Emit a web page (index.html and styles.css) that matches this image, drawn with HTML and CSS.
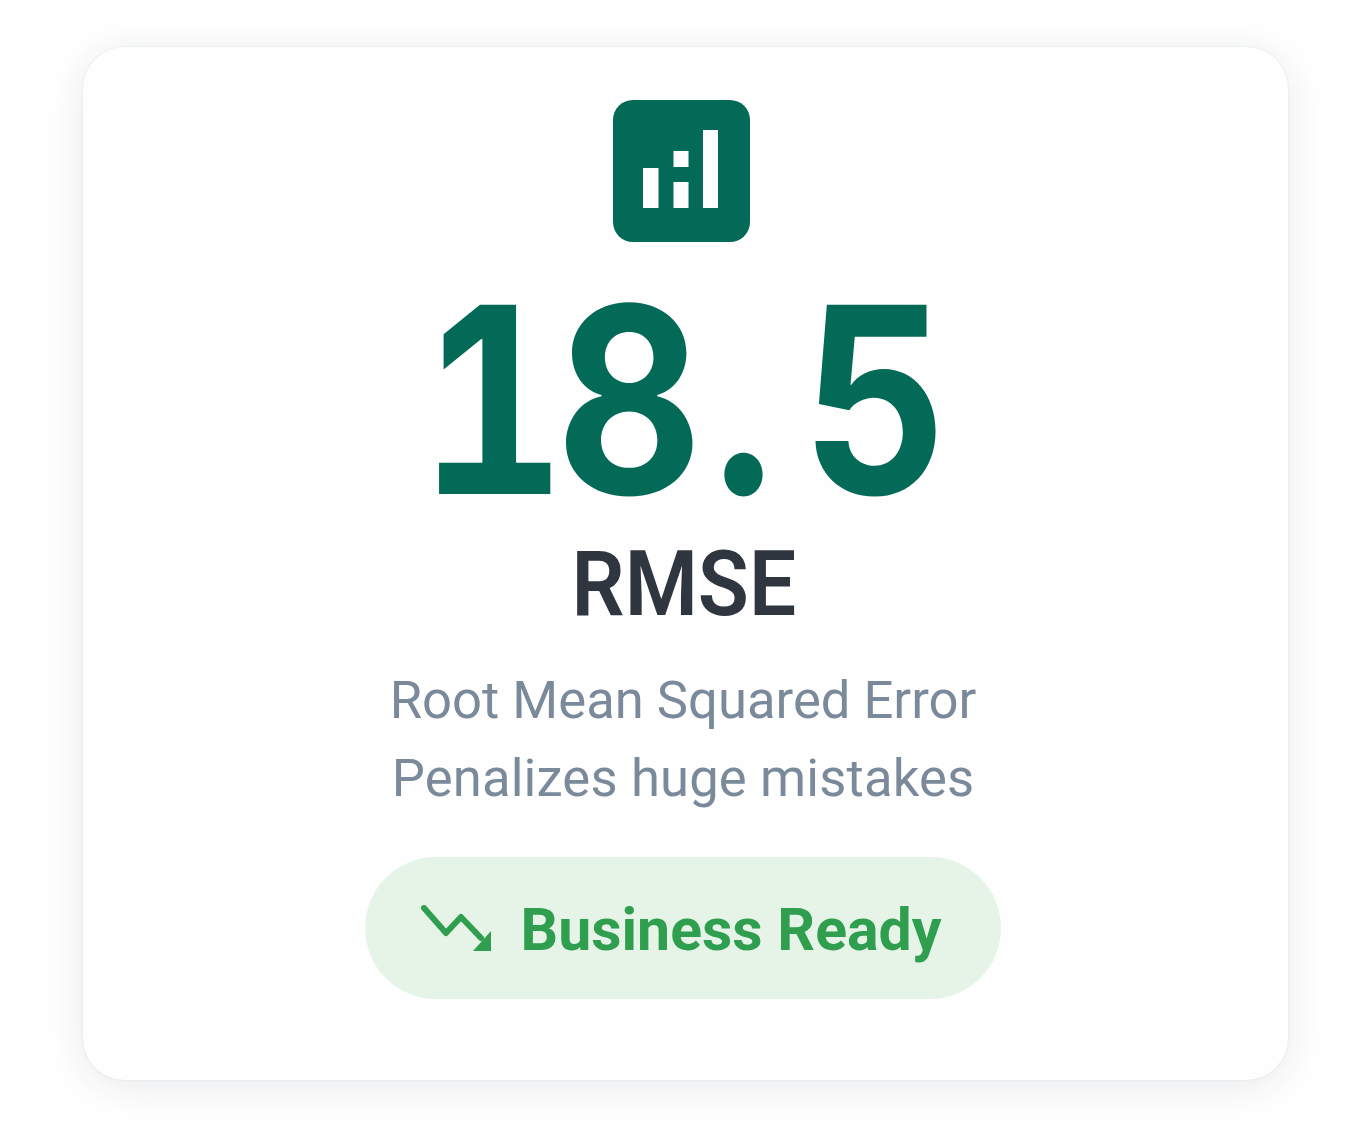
FILE: index.html
```html
<!DOCTYPE html>
<html lang="en">
<head>
<meta charset="utf-8">
<title>RMSE</title>
<link rel="stylesheet" href="styles.css">
</head>
<body>
<main class="card">
  <div class="icon-box">
    <svg class="icon" width="137" height="142" viewBox="0 0 137 142" aria-hidden="true">
      <path fill="#fff" d="M30 68h15.500v40H30zM60.500 51h15v16h-15zM60.500 82h15v26h-15zM90 30h15v78H90z"/>
    </svg>
  </div>
  <div class="value"><span class="d1">1</span><span class="d8">8</span><span class="dot">.</span><span class="d5">5</span></div>
  <h1 class="name">RMSE</h1>
  <p class="desc">Root Mean Squared Error</p>
  <p class="desc second">Penalizes huge mistakes</p>
  <div class="pill">
    <svg class="trend" width="70" height="46" viewBox="0 0 70 46" aria-hidden="true">
      <path fill="none" stroke="#2f9e4f" stroke-width="6" stroke-linecap="round" stroke-linejoin="round" d="M3 3 25 28 40 12 60 33"/>
      <path fill="#2f9e4f" d="M70 26V46H52Z"/>
    </svg>
    <span class="pill-text">Business Ready</span>
  </div>
</main>
</body>
</html>
```
FILE: styles.css
```css
* { box-sizing: border-box; }
html, body { margin: 0; background: #fff; }
body { padding: 47px 80px 68px 83px; height: 1148px; overflow: hidden; }
.card {
  width: 1205px;
  height: 1033px;
  background: #fefefe;
  border-radius: 42px;
  box-shadow: 0 0 3px rgba(30, 40, 60, 0.08), 0 6px 40px rgba(30, 40, 60, 0.10);
  padding-top: 53px;
  display: flex;
  flex-direction: column;
  align-items: center;
  font-family: Roboto, sans-serif;
}
.icon-box {
  width: 137px;
  height: 142px;
  margin-left: -8px;
  border-radius: 20px;
  background: #046a58;
}
.icon { display: block; }
.value {
  margin-top: 48px;
  height: 220px;
  margin-left: -3px;
  font-family: Inter, sans-serif;
  font-weight: 700;
  font-feature-settings: "tnum";
  font-size: 260px;
  line-height: 220px;
  color: #046a58;
  display: flex;
  transform: scaleX(0.87);
}
.d8 { margin-left: -11px; }
.dot { margin-left: 12px; }
.d5 { margin-left: 33px; }
.name {
  margin: 25px 0 0 -4px;
  font-size: 90px;
  font-weight: 600;
  line-height: 100px;
  color: #2f3640;
  transform: scaleX(0.93);
}
.desc {
  margin: 26px 0 0 -5px;
  font-size: 52.600px;
  line-height: 78px;
  color: #7a8a9b;
}
.second { margin-top: 0; letter-spacing: 0.15px; }
.pill {
  margin-top: 40px;
  margin-left: -6px;
  width: 636px;
  height: 142px;
  border-radius: 71px;
  background: #e6f4e8;
  display: flex;
  align-items: center;
  padding-left: 56px;
  gap: 30px;
}
.trend { flex: none; }
.pill-text {
  font-size: 59px;
  font-weight: 700;
  line-height: 1;
  padding-top: 2px;
  color: #2f9e4f;
}
```
